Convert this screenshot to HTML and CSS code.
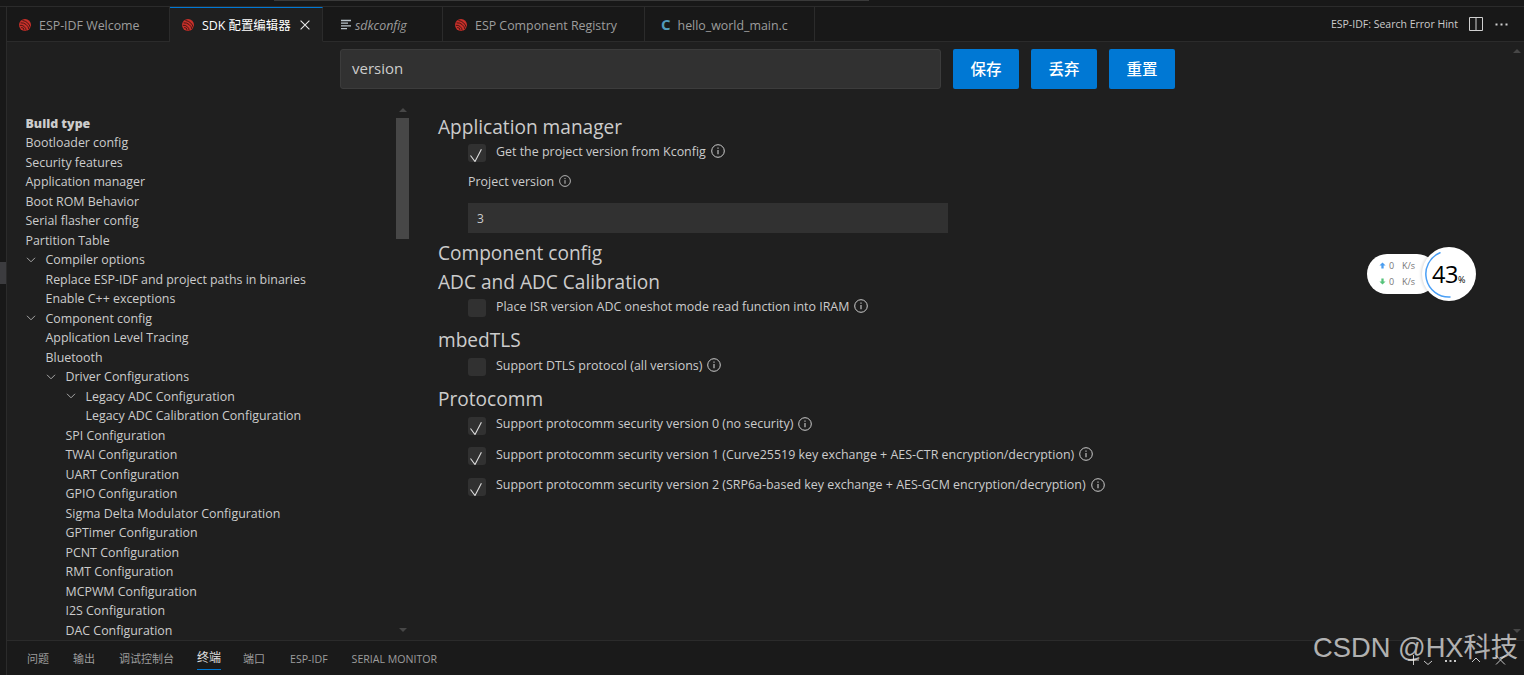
FILE: index.html
```html
<!DOCTYPE html>
<html lang="zh">
<head>
<meta charset="utf-8">
<title>SDK 配置编辑器</title>
<link rel="stylesheet" href="styles.css">
</head>
<body>
<svg class="defs" width="0" height="0" aria-hidden="true">
  <symbol id="esp" viewBox="0 0 14 14">
    <circle cx="7" cy="7" r="6" fill="#c9302a"/>
    <path d="M2.600 4.800a8 8 0 0 1 8.400 6.600M1.800 7.300a5.600 5.600 0 0 1 6.400 5.300M4.400 2.400a10 10 0 0 1 8 7.400M3.200 9.500a2.800 2.800 0 0 1 2.900 2.900" fill="none" stroke="#3a1311" stroke-width=".9"/>
  </symbol>
  <symbol id="info" viewBox="0 0 14 14">
    <circle cx="7" cy="7" r="6.300" fill="none" stroke="currentColor" stroke-width="1"/>
    <path d="M7 6v4.200M7 3.600v1.200" fill="none" stroke="currentColor" stroke-width="1.100"/>
  </symbol>
  <symbol id="check" viewBox="0 0 18 18">
    <path d="M2.500 11.500l4.500 6L13.400 5.300" fill="none" stroke="#dcdcdc" stroke-width="1.100"/>
  </symbol>
  <symbol id="chev" viewBox="0 0 10 6">
    <path d="M1 .8l4 4 4-4" fill="none" stroke="#a8a8a8" stroke-width="1"/>
  </symbol>
</svg>
<div class="topstrip"><span class="titlebox"></span></div>
<div class="main">
  <div class="activity"><span class="marker"></span></div>
  <div class="workspace">
    <div class="tabbar">
      <div class="tab w163"><svg class="ico"><use href="#esp"/></svg><span>ESP-IDF Welcome</span></div>
      <div class="tab active w153"><svg class="ico"><use href="#esp"/></svg><span class="cjk">SDK 配置编辑器</span><svg class="close" viewBox="0 0 10 10"><path d="M.6.6l8.800 8.800M9.400.6L.6 9.400" stroke="#e8e8e8" stroke-width="1.100"/></svg></div>
      <div class="tab w120"><svg class="ico lines" viewBox="0 0 14 14"><path d="M2 2.500h10M2 5.200h7M2 7.900h10M2 10.600h6" stroke="#b8c4cc" stroke-width="1.300"/></svg><span class="it">sdkconfig</span></div>
      <div class="tab w202"><svg class="ico"><use href="#esp"/></svg><span>ESP Component Registry</span></div>
      <div class="tab w170"><span class="clang">C</span><span>hello_world_main.c</span></div>
      <div class="tabfill">
        <span class="hint">ESP-IDF: Search Error Hint</span>
        <svg class="split" viewBox="0 0 14 14"><path d="M.5.5h13v13H.5zM7 .5v13" fill="none" stroke="#d0d0d0" stroke-width="1"/></svg>
        <svg class="more" viewBox="0 0 13 3"><path d="M.5.500h2v2h-2zM5.500.500h2v2h-2zM10.500.500h2v2h-2z" fill="#d0d0d0"/></svg>
      </div>
    </div>
    <div class="editor">
      <div class="searchrow">
        <div class="search">version</div>
        <div class="btn">保存</div>
        <div class="btn">丢弃</div>
        <div class="btn">重置</div>
      </div>
      <div class="body">
        <nav class="side">
          <div class="row bold">Build type</div>
          <div class="row">Bootloader config</div>
          <div class="row">Security features</div>
          <div class="row">Application manager</div>
          <div class="row">Boot ROM Behavior</div>
          <div class="row">Serial flasher config</div>
          <div class="row">Partition Table</div>
          <div class="row"><svg class="chev"><use href="#chev"/></svg>Compiler options</div>
          <div class="row l1">Replace ESP-IDF and project paths in binaries</div>
          <div class="row l1">Enable C++ exceptions</div>
          <div class="row"><svg class="chev"><use href="#chev"/></svg>Component config</div>
          <div class="row l1">Application Level Tracing</div>
          <div class="row l1">Bluetooth</div>
          <div class="row l1"><svg class="chev"><use href="#chev"/></svg>Driver Configurations</div>
          <div class="row l2"><svg class="chev"><use href="#chev"/></svg>Legacy ADC Configuration</div>
          <div class="row l3">Legacy ADC Calibration Configuration</div>
          <div class="row l2">SPI Configuration</div>
          <div class="row l2">TWAI Configuration</div>
          <div class="row l2">UART Configuration</div>
          <div class="row l2">GPIO Configuration</div>
          <div class="row l2">Sigma Delta Modulator Configuration</div>
          <div class="row l2">GPTimer Configuration</div>
          <div class="row l2">PCNT Configuration</div>
          <div class="row l2">RMT Configuration</div>
          <div class="row l2">MCPWM Configuration</div>
          <div class="row l2">I2S Configuration</div>
          <div class="row l2">DAC Configuration</div>
        </nav>
        <div class="vscroll">
          <span class="arrow up"></span>
          <span class="thumb"></span>
          <span class="arrow down"></span>
        </div>
        <section class="content">
          <h2 class="first">Application manager</h2>
          <div class="opt o1"><span class="box on"><svg><use href="#check"/></svg></span>Get the project version from Kconfig<svg class="info"><use href="#info"/></svg></div>
          <div class="label">Project version<svg class="info small"><use href="#info"/></svg></div>
          <div class="field">3</div>
          <h2 class="comp">Component config</h2>
          <h2 class="adc">ADC and ADC Calibration</h2>
          <div class="opt o2"><span class="box"></span>Place ISR version ADC oneshot mode read function into IRAM<svg class="info"><use href="#info"/></svg></div>
          <h2 class="mbed">mbedTLS</h2>
          <div class="opt o2"><span class="box"></span>Support DTLS protocol (all versions)<svg class="info"><use href="#info"/></svg></div>
          <h2 class="proto">Protocomm</h2>
          <div class="opt o3"><span class="box on"><svg><use href="#check"/></svg></span>Support protocomm security version 0 (no security)<svg class="info"><use href="#info"/></svg></div>
          <div class="opt o3"><span class="box on"><svg><use href="#check"/></svg></span>Support protocomm security version 1 (Curve25519 key exchange + AES-CTR encryption/decryption)<svg class="info"><use href="#info"/></svg></div>
          <div class="opt o3"><span class="box on"><svg><use href="#check"/></svg></span>Support protocomm security version 2 (SRP6a-based key exchange + AES-GCM encryption/decryption)<svg class="info"><use href="#info"/></svg></div>
        </section>
      </div>
    </div>
    <div class="panel">
      <span class="ptab cjk">问题</span>
      <span class="ptab cjk">输出</span>
      <span class="ptab cjk">调试控制台</span>
      <span class="ptab cjk sel">终端</span>
      <span class="ptab cjk">端口</span>
      <span class="ptab esp">ESP-IDF</span>
      <span class="ptab">SERIAL MONITOR</span>
      <svg class="pactions" viewBox="0 0 100 12"><path d="M0 6h11M5.500 1v10M16 7l4 3.500L24 7" fill="none" stroke="#c8c8c8" stroke-width="1"/><path d="M37 6h2v2h-2zM41.500 6h2v2h-2zM46 6h2v2h-2z" fill="#c8c8c8"/><path d="M64 8l4-4 4 4M88 1.500l9 9M97 1.500l-9 9" fill="none" stroke="#c8c8c8" stroke-width="1"/></svg>
    </div>
  </div>
</div>
<span class="edge-arrow top"></span>
<span class="edge-arrow bottom"></span>
<div class="widget">
  <div class="speeds">
    <div class="sp"><svg viewBox="0 0 8 8"><path d="M4 .5L7.500 4H5.300v3.500H2.700V4H.5z" fill="#4a9df0"/></svg><span class="n">0</span><span class="u">K/s</span></div>
    <div class="sp"><svg viewBox="0 0 8 8"><path d="M4 7.500L7.500 4H5.300V.5H2.700V4H.5z" fill="#55c27a"/></svg><span class="n">0</span><span class="u">K/s</span></div>
  </div>
  <div class="gauge">
    <svg viewBox="0 0 54 54"><path d="M18 5.800A23 23 0 0 0 28 50" fill="none" stroke="#4a9ff5" stroke-width="1.500" stroke-linecap="round"/></svg>
    <span class="pct">43<small>%</small></span>
  </div>
</div>
<div class="wm">CSDN @HX科技</div>
</body>
</html>
```

FILE: styles.css
```css
* { box-sizing: border-box; }
html, body { margin: 0; height: 100%; }
body {
  background: #1f1f1f;
  color: #cccccc;
  font-family: "Open Sans", "Noto Sans CJK SC", sans-serif;
  font-size: 12.4px;
  overflow: hidden;
  display: flex;
  flex-direction: column;
  position: relative;
}
.defs { position: absolute; }
.topstrip { height: 7px; flex: none; background: #181818; border-bottom: 1px solid #2b2b2b; display: flex; padding-left: 274px; }
.titlebox { display: block; width: 595px; height: 1px; background: #3a3a3a; }
.main { flex: 1; display: flex; min-height: 0; }
.activity { width: 7px; flex: none; background: #181818; border-right: 1px solid #2b2b2b; padding-top: 255px; }
.marker { display: block; width: 6px; height: 22px; background: #3c3c3f; }
.workspace { flex: 1; min-width: 0; display: flex; flex-direction: column; }

.tabbar { height: 35px; flex: none; display: flex; background: #181818; }
.tab {
  display: flex; align-items: center; flex: none;
  padding: 2px 0 0 11px; gap: 7px;
  color: #9d9d9d;
  border-right: 1px solid #2b2b2b;
  border-bottom: 1px solid #2b2b2b;
}
.tab .ico { width: 14px; height: 14px; flex: none; }
.w163 { width: 163px; }
.w153 { width: 153px; }
.w120 { width: 120px; padding-left: 16px; gap: 2px; }
.w202 { width: 202px; }
.w170 { width: 170px; padding-left: 16px; gap: 7px; }
.tab.active { background: #1f1f1f; color: #ffffff; border-bottom-color: #1f1f1f; border-top: 1px solid #0078d4; padding-top: 1px; }
.close { width: 10px; height: 10px; margin-left: 2px; flex: none; }
.it { font-style: italic; }
.clang { color: #519aba; font-weight: 700; font-size: 15px; line-height: 1; position: relative; top: -1px; }
.tabfill { flex: 1; display: flex; align-items: center; justify-content: flex-end; border-bottom: 1px solid #2b2b2b; padding-right: 16px; }
.hint { font-size: 10.5px; color: #cccccc; }
.split { width: 14px; height: 14px; margin-left: 11px; }
.more { width: 13px; height: 3px; margin-left: 12px; }

.editor { flex: 1; min-height: 0; display: flex; flex-direction: column; }
.searchrow { flex: none; display: flex; gap: 12px; padding: 7px 0 0 333px; height: 60px; }
.search {
  width: 601px; height: 40px; line-height: 37px; padding-left: 11px;
  background: #313131; border: 1px solid #3c3c3c; border-radius: 3px;
  font-size: 15px; color: #cccccc;
}
.btn {
  width: 66px; height: 40px; line-height: 40px; text-align: center;
  background: #0078d4; color: #fff; border-radius: 2px; font-size: 15.500px; font-weight: 500;
}
.body { flex: 1; min-height: 0; display: flex; }
.side { width: 389px; flex: none; overflow: hidden; padding: 11.500px 0 0 18.500px; }
.row { height: 19.500px; line-height: 19.500px; white-space: nowrap; display: flex; align-items: center; }
.bold { font-weight: 800; }
.chev { width: 10px; height: 6px; margin-right: 10px; flex: none; }
.l1 { padding-left: 20px; }
.l2 { padding-left: 40px; }
.l3 { padding-left: 60px; }
.vscroll { width: 13px; flex: none; display: flex; flex-direction: column; align-items: center; padding-top: 6px; }
.thumb { width: 13px; height: 121px; background: #474747; margin-top: 6px; }
.arrow { width: 0; height: 0; border-left: 4px solid transparent; border-right: 4px solid transparent; }
.arrow.up { border-bottom: 4px solid #474747; }
.arrow.down { border-top: 4px solid #474747; margin-top: auto; margin-bottom: 8px; }

.content { flex: 1; min-width: 0; padding: 0 0 0 29px; font-size: 12.450px; }
h2 { margin: 0; font-size: 19.100px; font-weight: 400; line-height: 26px; color: #cccccc; }
.first { margin-top: 12px; }
.opt { display: flex; align-items: center; height: 20px; padding-left: 30px; white-space: nowrap; }
.o1 { margin-top: 1px; }
.box { width: 18px; height: 18px; border-radius: 3px; background: #313131; margin-right: 10px; flex: none; display: block; position: relative; top: 2px; }
.box svg { width: 18px; height: 18px; display: block; }
.info { width: 14px; height: 14px; margin-left: 5px; flex: none; color: #cccccc; }
.info.small { width: 12px; height: 12px; margin-left: 5px; position: relative; top: -1px; }
.label { padding-left: 30px; margin-top: 11px; height: 20px; line-height: 20px; display: flex; align-items: center; }
.field { margin: 11px 0 0 30px; width: 480px; height: 30px; line-height: 31px; padding-left: 9px; background: #313131; font-size: 12px; }
.comp { margin-top: 7px; }
.adc { margin-top: 3px; }
.o2 { margin-top: 1px; }
.mbed { margin-top: 11px; margin-bottom: 2px; }
.proto { margin-top: 11px; margin-bottom: 1.700px; }
.o3 { margin-bottom: 10.500px; }

.panel { height: 35px; flex: none; display: flex; align-items: center; gap: 24px; padding: 2px 16px 0 20px; border-top: 1px solid #2b2b2b; background: #1a1a1a; font-size: 10.600px; color: #9d9d9d; }
.ptab { line-height: 20px; }
.ptab.cjk { font-size: 11px; }
.ptab.sel { color: #e0e0e0; border-bottom: 1px solid #0078d4; height: 22px; font-size: 12px; margin: 0 -2px 0 -1px; }
.ptab.esp { margin-left: 1px; }
.pactions { width: 100px; height: 12px; margin-left: auto; position: relative; top: 1px; }

.edge-arrow { position: absolute; left: 1513px; width: 0; height: 0; border-left: 4px solid transparent; border-right: 4px solid transparent; }
.edge-arrow.top { top: 49px; border-bottom: 4px solid #474747; }
.edge-arrow.bottom { top: 629px; border-top: 4px solid #474747; }

.widget { position: absolute; left: 1367px; top: 247px; display: flex; align-items: center; }
.speeds { width: 70px; height: 40px; background: #fff; border-radius: 20px; padding: 4px 0 0 12px; margin-right: -15px; font-size: 9px; color: #777; flex: none; }
.sp { display: flex; align-items: center; height: 15.500px; }
.sp svg { width: 7px; height: 7px; }
.sp .n { margin-left: 3px; width: 13px; }
.gauge { width: 54px; height: 54px; border-radius: 50%; background: #fff; position: relative; box-shadow: -1px 0 3px rgba(0,0,0,.15); flex: none; }
.gauge svg { position: absolute; inset: 0; width: 54px; height: 54px; }
.pct { position: absolute; left: 10px; top: 12px; color: #000; font-size: 23.500px; line-height: 30px; font-family: "Open Sans", sans-serif; letter-spacing: -.5px; }
.pct small { font-size: 9px; letter-spacing: 0; }

.wm { position: absolute; left: 1313px; top: 629px; font-size: 27.300px; line-height: 38px; color: rgba(255,255,255,.68); font-family: "Liberation Sans", "Noto Sans CJK SC", sans-serif; white-space: nowrap; }
```
